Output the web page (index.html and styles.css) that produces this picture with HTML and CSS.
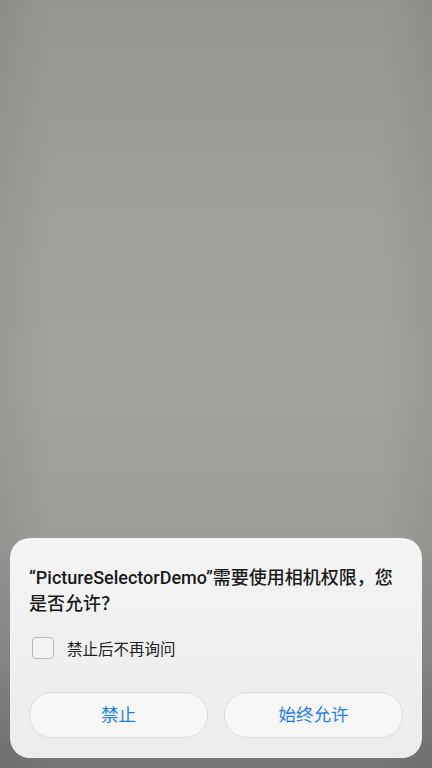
FILE: index.html
```html
<!DOCTYPE html>
<html lang="zh-CN">
<head>
  <meta charset="UTF-8">
  <title>权限请求</title>
  <link rel="stylesheet" href="styles.css">
</head>
<body>

  <div class="screen">
    <div class="dialog">
      <div class="title">“PictureSelectorDemo”需要使用相机权限，您是否允许？</div>
      <label class="check-row">
        <span class="checkbox"></span>
        <span class="check-label">禁止后不再询问</span>
      </label>
      <div class="actions">
        <div class="btn">禁止</div>
        <div class="btn">始终允许</div>
      </div>
    </div>
  </div>

</body>
</html>
```

FILE: styles.css
```css
html, body {
  margin: 0;
  padding: 0;
}
body {
  font-family: Roboto, 'Noto Sans CJK SC', sans-serif;
  width: 432px;
  height: 768px;
  overflow: hidden;
}
.screen {
  height: 768px;
  box-sizing: border-box;
  display: flex;
  flex-direction: column;
  justify-content: flex-end;
  padding: 0 10px 10px;
  background:
    linear-gradient(to right, rgba(0, 0, 0, 0.06), rgba(0, 0, 0, 0) 12%, rgba(0, 0, 0, 0) 88%, rgba(0, 0, 0, 0.06)),
    linear-gradient(to bottom, #969590 0%, #a2a09c 30%, #a5a39f 50%, #9e9c98 70%, #8e8c89 85%, #767473 100%);
}
.dialog {
  background: linear-gradient(to bottom, #f4f4f4, #ececec);
  border-radius: 20px;
  padding: 27px 19px 20px;
}
.title {
  font-size: 18px;
  font-weight: 500;
  line-height: 26px;
  color: #1a1a1a;
}
.check-row {
  display: flex;
  align-items: center;
  margin-top: 20px;
  height: 22px;
}
.checkbox {
  width: 20px;
  height: 20px;
  margin-left: 3px;
  border: 1px solid #b9b9b9;
  border-radius: 4px;
  background: #f3f3f3;
}
.check-label {
  margin-left: 13px;
  font-size: 15.5px;
  color: #222;
}
.actions {
  display: flex;
  gap: 16px;
  margin-top: 33px;
}
.btn {
  flex: 1;
  height: 44px;
  line-height: 44px;
  text-align: center;
  border: 1px solid #dcdcdc;
  border-radius: 23px;
  background: #f7f7f7;
  color: #1f80f3;
  font-size: 17.5px;
}
```
